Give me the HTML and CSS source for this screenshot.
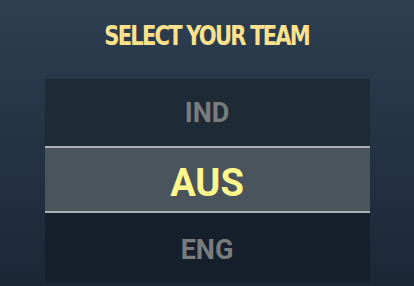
FILE: index.html
```html
<!DOCTYPE html>
<html lang="en">
<head>
  <meta charset="UTF-8">
  <meta name="viewport" content="width=device-width, initial-scale=1.0">
  <title>Select Team</title>
  <link rel="stylesheet" href="styles.css">
</head>
<body>

  <div class="screen">
    <h1 class="title">SELECT YOUR TEAM</h1>

    <!-- Team picker -->
    <div class="picker">
      <div class="team">IND</div>
      <div class="team selected">AUS</div>
      <div class="team last">ENG</div>
    </div>
  </div>

</body>
</html>
```

FILE: styles.css
```css
* {
  margin: 0;
  padding: 0;
  box-sizing: border-box;
}

body {
  font-family: Roboto, 'Liberation Sans', sans-serif;
  background: #1b2838;
}

.screen {
  width: 414px;
  height: 286px;
  background: linear-gradient(#2d3f51, #1b2737);
  display: flex;
  flex-direction: column;
  align-items: center;
  overflow: hidden;
}

.title {
  font-family: 'DejaVu Sans Condensed', 'DejaVu Sans', sans-serif;
  font-stretch: condensed;
  font-weight: bold;
  font-size: 26px;
  line-height: 30px;
  letter-spacing: -2px;
  color: #fde28d;
  margin-top: 21px;
  height: 58px;
  transform: scaleX(0.9);
}

.picker {
  width: 325px;
  display: flex;
  flex-direction: column;
}

.team {
  height: 67px;
  display: flex;
  align-items: center;
  justify-content: center;
  font-weight: bold;
  font-size: 27px;
  color: #7b7c7e;
  background: #1f2a37;
}

.team.selected {
  height: 67px;
  padding-top: 6px;
  background: #49545d;
  border-top: 2px solid #a9b1b6;
  border-bottom: 2px solid #a9b1b6;
  color: #fff78c;
  font-size: 38px;
}

.team.last {
  height: 69px;
  padding-top: 5px;
  background: #16202c;
}
```
